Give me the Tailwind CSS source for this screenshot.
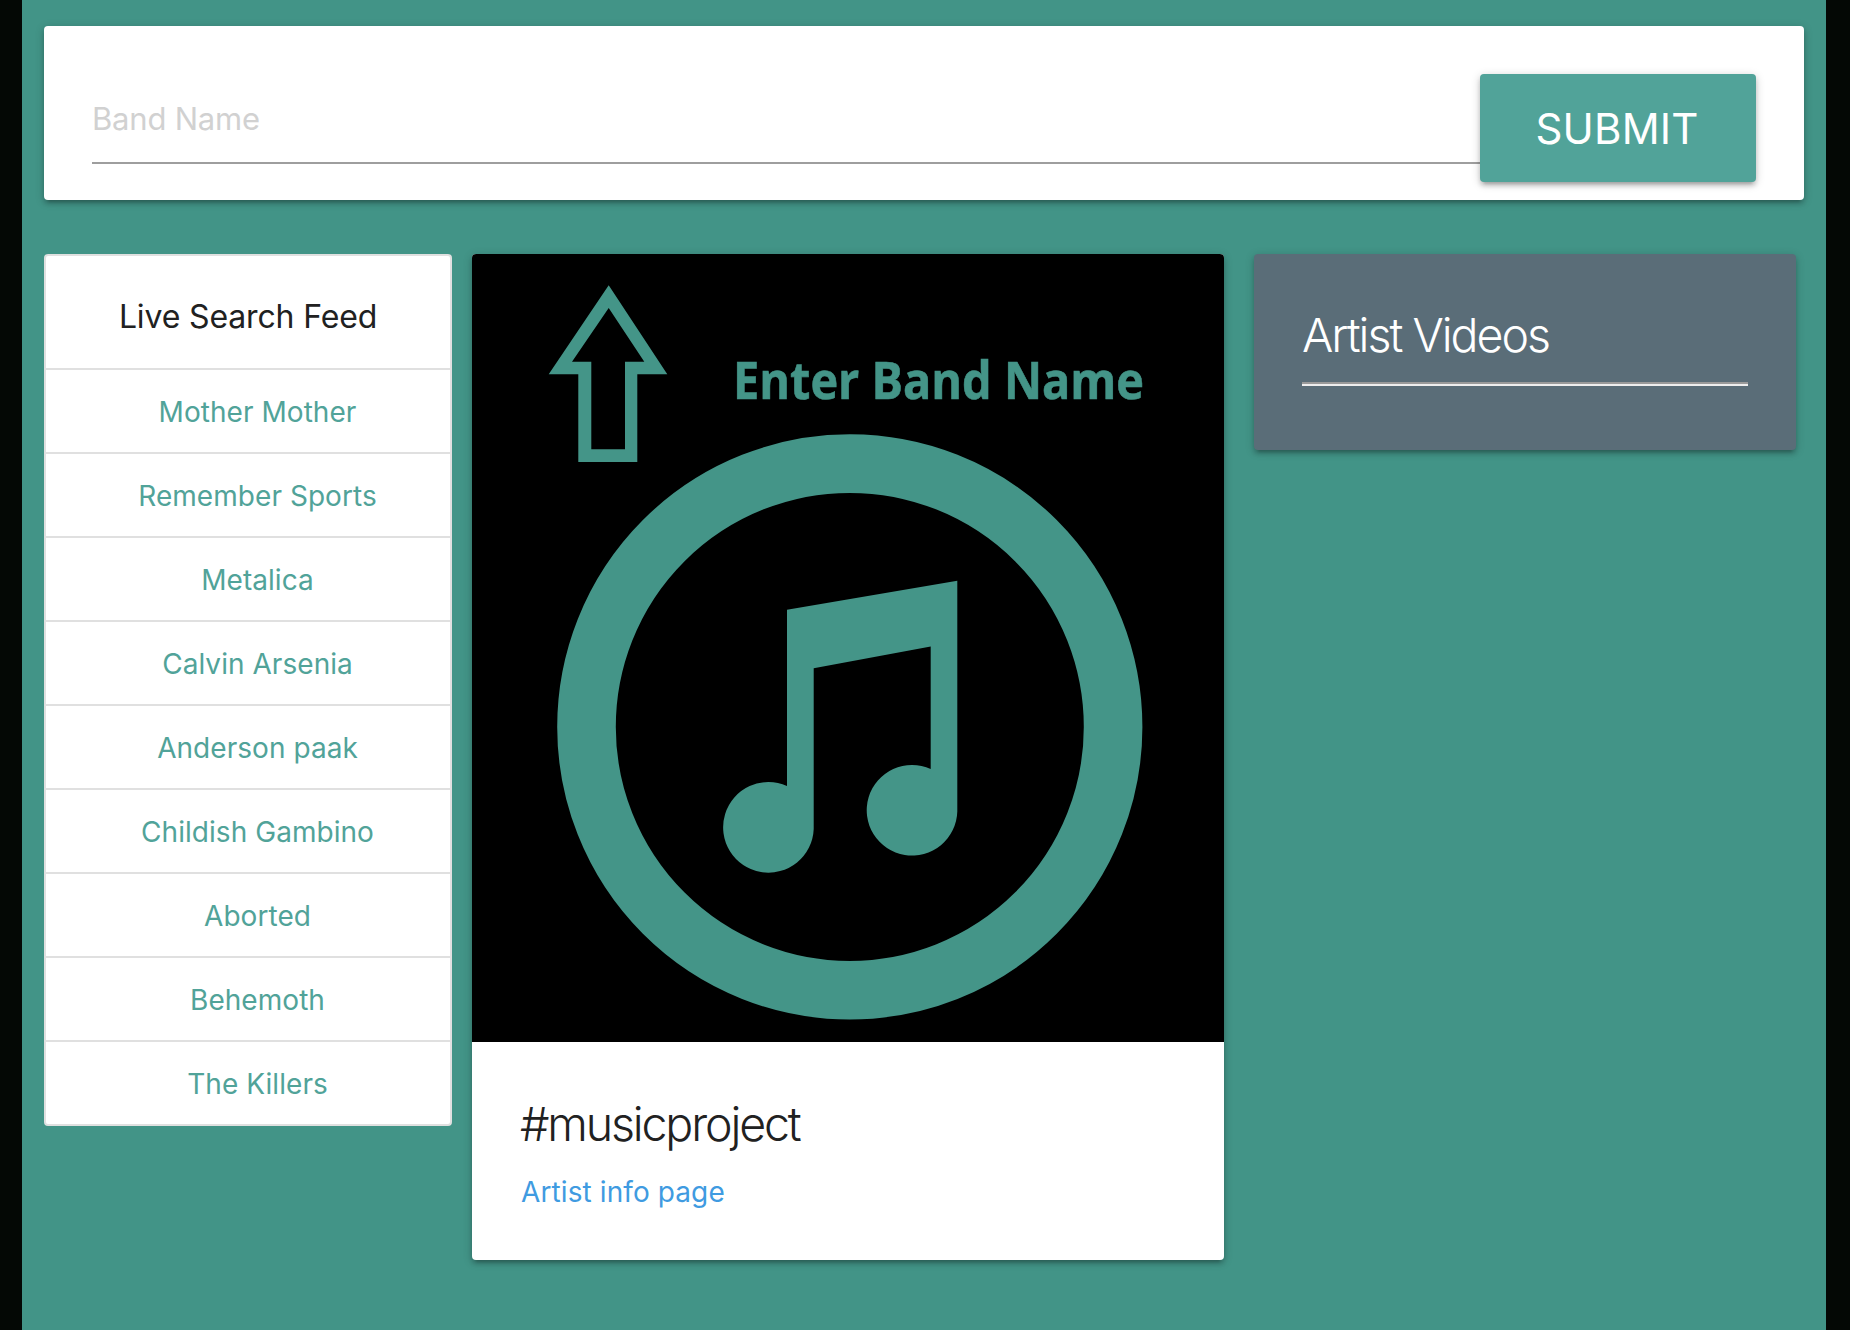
<!DOCTYPE html>
<html lang="en">
<head>
<meta charset="utf-8">
<title>Music Project</title>
<script src="https://cdn.jsdelivr.net/npm/@tailwindcss/browser@4"></script>
</head>
<body class="h-[1330px] overflow-hidden bg-[#040805] px-[22px] font-['Inter',sans-serif] text-[#212121]">
<div class="mr-[2px] h-full bg-[#429487] px-[22px] pt-[26px]">
  <!-- Search bar -->
  <form class="flex h-[174px] items-start rounded-[4px] bg-white px-12 pt-12 shadow-[0_4px_4px_0_rgba(0,0,0,0.14),0_6px_2px_-4px_rgba(0,0,0,0.12),0_2px_10px_0_rgba(0,0,0,0.2)]">
    <input class="h-[90px] min-w-0 flex-1 border-b-2 border-[#9e9e9e] text-[31px] tracking-[-0.2px] outline-none placeholder:text-[#d1d1d1]" type="text" placeholder="Band Name">
    <button type="button" class="h-[108px] w-[276px] rounded-[4px] bg-[#51a399] pt-px pr-[2px] text-[42px] leading-[108px] tracking-[0.2px] text-white shadow-[0_4px_4px_0_rgba(0,0,0,0.14),0_6px_2px_-4px_rgba(0,0,0,0.12),0_2px_10px_0_rgba(0,0,0,0.2)]">SUBMIT</button>
  </form>

  <main class="mt-[54px] flex items-start">
    <!-- Recent searches -->
    <ul class="w-[408px] divide-y-2 divide-[#e0e0e0] rounded-[4px] border-2 border-[#e0e0e0] bg-white text-center text-[28px] tracking-[0.05px] text-[#51a399]">
      <li class="h-[114px] pt-[5px] text-[32px] leading-[112px] tracking-[-0.15px] text-[#212121]"><h5>Live Search Feed</h5></li>
      <li class="h-[84px] pl-[19px] leading-[84px]"><span>Mother Mother</span></li>
      <li class="h-[84px] pl-[19px] leading-[84px]"><span>Remember Sports</span></li>
      <li class="h-[84px] pl-[19px] leading-[84px]"><span>Metalica</span></li>
      <li class="h-[84px] pl-[19px] leading-[84px]"><span>Calvin Arsenia</span></li>
      <li class="h-[84px] pl-[19px] leading-[84px]"><span>Anderson paak</span></li>
      <li class="h-[84px] pl-[19px] leading-[84px]"><span>Childish Gambino</span></li>
      <li class="h-[84px] pl-[19px] leading-[84px]"><span>Aborted</span></li>
      <li class="h-[84px] pl-[19px] leading-[84px]"><span>Behemoth</span></li>
      <li class="h-[82px] pl-[19px] leading-[84px]"><span>The Killers</span></li>
    </ul>

    <!-- Artist card -->
    <section class="ml-5 h-[1006px] w-[752px] overflow-hidden rounded-[4px] bg-white shadow-[0_4px_4px_0_rgba(0,0,0,0.14),0_6px_2px_-4px_rgba(0,0,0,0.12),0_2px_10px_0_rgba(0,0,0,0.2)]">
      <svg class="block h-[788px] w-[752px] bg-black" viewBox="472 254 752 788" fill="#449588">
        <path fill-rule="evenodd" d="M608.7 285.3 667.3 374.3H637.3V462H578.3V374.3H548.7ZM608.7 308 572 361.7H591.3V449.3H625V361.7H644.3Z"/>
        <text x="733" y="398.9" font-family="Open Sans, sans-serif" font-weight="700" font-size="51.5" stroke="#449588" stroke-width="0.6" textLength="411" lengthAdjust="spacingAndGlyphs">Enter Band Name</text>
        <circle cx="849.8" cy="726.9" r="263.3" fill="none" stroke="#449588" stroke-width="58.6"/>
        <path d="M787 609.7 957.3 580.7V811.5A45.3 45.3 0 1 1 930.7 769V646.5L813.7 668.3V829A45.3 45.3 0 1 1 787 786Z"/>
      </svg>
      <div class="px-[48px] pt-[52px]">
        <h3 class="text-[46.5px] leading-[60px] font-light tracking-[-2.15px]">#musicproject</h3>
        <a class="ml-px block pt-[18px] text-[28px] leading-[40px] tracking-[0.1px] text-[#3f9be1]">Artist info page</a>
      </div>
    </section>

    <!-- Videos -->
    <section class="ml-[30px] h-[196px] w-[542px] rounded-[4px] bg-[#5a6d78] px-12 pt-[51px] text-white shadow-[0_4px_4px_0_rgba(0,0,0,0.14),0_6px_2px_-4px_rgba(0,0,0,0.12),0_2px_10px_0_rgba(0,0,0,0.2)]">
      <h3 class="text-[46.5px] leading-[60px] font-light tracking-[-2px]">Artist Videos</h3>
      <hr class="mt-[17px] border-t-2 border-b-2 border-t-[#9a9a9a] border-b-[#eeeeee]">
    </section>
  </main>
</div>
</body>
</html>
